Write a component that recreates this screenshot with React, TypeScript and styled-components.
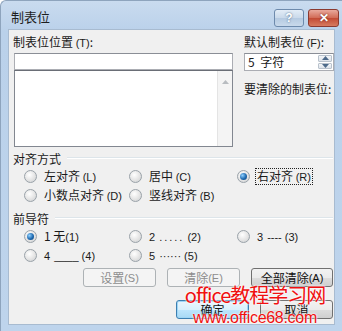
import React from 'react';
import styled, { createGlobalStyle, css } from 'styled-components';

const GlobalStyle = createGlobalStyle`
  html, body {
    margin: 0;
    padding: 0;
    background: #ffffff;
  }
  body {
    font-family: 'Noto Sans CJK SC', 'Liberation Sans', sans-serif;
    font-size: 12px;
    color: #1a1a1a;
  }
`;

// Window frame with the aero-like light blue border
const Window = styled.div`
  width: 342px;
  height: 331px;
  box-sizing: border-box;
  display: flex;
  flex-direction: column;
  background: linear-gradient(#c9dbef, #bad1ea 30px, #bed4ec);
  border-left: 1px solid #8ea4bd;
  border-top: 1px solid #8ea4bd;
  border-top-left-radius: 6px;
`;

const TitleBar = styled.div`
  height: 28px;
  display: flex;
  align-items: center;
  justify-content: space-between;
  padding: 0 3px 0 10px;
`;

const Title = styled.span`
  font-size: 13px;
  color: #1e1e1e;
  padding-top: 2px;
`;

const CaptionButtons = styled.div`
  display: flex;
  gap: 4px;
  align-self: flex-start;
  margin-top: 8px;
`;

const CaptionButton = styled.div<{ $close?: boolean }>`
  height: 18px;
  box-sizing: border-box;
  border: 1px solid #6d8aac;
  border-radius: 3px;
  display: flex;
  align-items: center;
  justify-content: center;
  font-family: 'Liberation Sans', sans-serif;
  font-weight: bold;
  font-size: 12px;
  ${(p) =>
    p.$close
      ? css`
          width: 31px;
          border-color: #8b3a30;
          background: linear-gradient(#e9a99c, #d16a55 50%, #c24a34 51%, #d77a5f);
          color: #ffffff;
          text-shadow: 0 0 2px #5a1a10;
        `
      : css`
          width: 30px;
          background: linear-gradient(#e3edf7, #c9d9ea 50%, #b5cae1 51%, #c8d9eb);
          color: #ffffff;
          text-shadow: 0 0 2px #3b5a7d;
        `}
`;

const Client = styled.div`
  position: relative;
  flex: 1;
  margin: 0 7px 6px 7px;
  background: #f0f0f0;
  border: 1px solid #a8bbd0;
  padding: 4px 0 0 4px;
  box-sizing: border-box;
`;

const TopArea = styled.div`
  display: grid;
  grid-template-columns: 220px 90px;
  column-gap: 11px;
`;

const Column = styled.div`
  display: flex;
  flex-direction: column;
`;

const Label = styled.div`
  height: 19px;
  line-height: 16px;
  white-space: nowrap;
`;

const TextInput = styled.div`
  height: 17px;
  box-sizing: border-box;
  margin-left: 1px;
  border: 1px solid #abadb3;
  border-top-color: #8a8e96;
  background: #ffffff;
`;

const ListBox = styled.div`
  height: 77px;
  box-sizing: border-box;
  margin-left: 1px;
  border: 1px solid #828790;
  border-top-color: #6a6e76;
  background: #ffffff;
  display: flex;
  justify-content: flex-end;
`;

const ScrollTrack = styled.div`
  width: 14px;
  border-left: 1px solid #e4e4e4;
  background: #f4f4f4;
  display: flex;
  justify-content: center;
  padding-top: 9px;
`;

const Spinner = styled.div`
  height: 18px;
  box-sizing: border-box;
  border: 1px solid #abadb3;
  border-top-color: #8a8e96;
  background: #ffffff;
  display: flex;
  align-items: center;
  justify-content: space-between;
  padding-left: 3px;
`;

const SpinValue = styled.span`
  line-height: 14px;
  font-size: 12px;
  word-spacing: 3px;
`;

const SpinButtons = styled.div`
  width: 14px;
  height: 14px;
  margin-right: 1px;
  display: flex;
  flex-direction: column;
  gap: 1px;
`;

const SpinButton = styled.div`
  flex: 1;
  border: 1px solid #b9c2cc;
  border-radius: 1px;
  background: linear-gradient(#f4f6f8, #dde3ea);
  display: flex;
  align-items: center;
  justify-content: center;
`;

const RightNote = styled.div`
  margin-top: 9px;
  white-space: nowrap;
`;

const GroupTitle = styled.div<{ $top: number }>`
  display: flex;
  align-items: center;
  margin-top: ${(p) => p.$top}px;
  height: 16px;
  white-space: nowrap;

  &::after {
    content: '';
    flex: 1;
    margin: 0 1px 0 6px;
    border-top: 1px solid #dde5ea;
    border-bottom: 1px solid #ffffff;
  }
`;

const RadioGrid = styled.div`
  display: grid;
  grid-template-columns: 105px 108px auto;
  row-gap: 6px;
  padding: 4px 0 0 11px;
`;

const RadioItem = styled.div`
  display: flex;
  align-items: center;
  height: 13px;
  gap: 6px;
  white-space: nowrap;
`;

const RadioCircle = styled.span<{ $checked?: boolean }>`
  position: relative;
  width: 11px;
  height: 11px;
  border-radius: 50%;
  border: 1px solid #9aa2a9;
  background: radial-gradient(circle at 40% 35%, #ffffff, #e4e4e4 55%, #c9cdd0);
  flex-shrink: 0;

  ${(p) =>
    p.$checked &&
    css`
      &::after {
        content: '';
        position: absolute;
        left: 2px;
        top: 2px;
        width: 7px;
        height: 7px;
        border-radius: 50%;
        background: radial-gradient(circle at 35% 35%, #8fd0ff, #1f6ab0 55%, #0b3e73);
      }
    `}
`;

const RadioText = styled.span<{ $focus?: boolean }>`
  line-height: 14px;
  padding: 0 1px;
  ${(p) =>
    p.$focus &&
    css`
      outline: 1px dotted #222;
      outline-offset: 0;
    `}
`;

const Key = styled.span`
  font-family: 'Liberation Sans', sans-serif;
  font-size: 11px;
`;

// leader samples are drawn in a latin face so the dots stay narrow
const Leader = styled.span<{ $spaced?: boolean }>`
  font-family: 'Liberation Sans', sans-serif;
  font-size: 11px;
  letter-spacing: ${(p) => (p.$spaced ? '2px' : '0')};
  margin: 0 3px 0 4px;
`;

const ButtonArea = styled.div`
  display: flex;
  flex-direction: column;
  align-items: flex-end;
  gap: 13px;
  margin-top: 6px;
  padding-right: 1px;
`;

const ButtonRow = styled.div`
  display: flex;
  gap: 11px;
`;

const Button = styled.div<{ $disabled?: boolean; $default?: boolean; $w?: number }>`
  width: ${(p) => p.$w ?? 73}px;
  height: 19px;
  box-sizing: border-box;
  border-radius: 3px;
  display: flex;
  align-items: center;
  justify-content: center;
  white-space: nowrap;
  border: 1px solid #707070;
  background: linear-gradient(#f2f2f2, #ebebeb 50%, #dddddd 51%, #cfcfcf);
  color: #111;
  ${(p) =>
    p.$disabled &&
    css`
      border-color: #adb2b5;
      background: #f4f4f4;
      color: #8d8d8d;
    `}
  ${(p) =>
    p.$default &&
    css`
      border-color: #3c7fb1;
      box-shadow: inset 0 0 0 1px #9fd6f6;
      background: linear-gradient(#eaf6fd, #d9f0fc 50%, #bee6fd 51%, #a7d9f5);
    `}
`;

const Watermark = styled.div`
  position: absolute;
  left: 176px;
  top: 253px;
  width: 140px;
  display: flex;
  flex-direction: column;
  align-items: center;
  color: #f01010;
  pointer-events: none;
  text-shadow: 0 0 2px #ffffff, 0 0 2px #ffffff;
`;

const WatermarkTitle = styled.div`
  font-size: 20px;
  line-height: 24px;
  letter-spacing: -1px;
  white-space: nowrap;
`;

const WatermarkUrl = styled.div`
  font-family: 'Liberation Sans', sans-serif;
  font-size: 16px;
  line-height: 16px;
  margin-top: 3px;
  letter-spacing: -0.3px;
  white-space: nowrap;
`;

type RadioProps = {
  label: React.ReactNode;
  checked?: boolean;
  focus?: boolean;
};

function Radio({ label, checked, focus }: RadioProps) {
  return (
    <RadioItem>
      <RadioCircle $checked={checked} />
      <RadioText $focus={focus}>{label}</RadioText>
    </RadioItem>
  );
}

const Arrow = ({ up, color = '#4d6a8a' }: { up?: boolean; color?: string }) => (
  <svg width="7" height="4" viewBox="0 0 7 4">
    <path d={up ? 'M0 4 L3.5 0 L7 4 Z' : 'M0 0 L3.5 4 L7 0 Z'} fill={color} />
  </svg>
);

export default function App() {
  return (
    <>
      <GlobalStyle />
      <Window>
        <TitleBar>
          <Title>制表位</Title>
          <CaptionButtons>
            <CaptionButton>?</CaptionButton>
            <CaptionButton $close>✕</CaptionButton>
          </CaptionButtons>
        </TitleBar>

        <Client>
          <TopArea>
            <Column>
              <Label>
                制表位位置 <Key>(T)</Key>:
              </Label>
              <TextInput />
              <ListBox>
                <ScrollTrack>
                  <Arrow up color="#b8bcc0" />
                </ScrollTrack>
              </ListBox>
            </Column>
            <Column>
              <Label>
                默认制表位 <Key>(F)</Key>:
              </Label>
              <Spinner>
                <SpinValue>5 字符</SpinValue>
                <SpinButtons>
                  <SpinButton>
                    <Arrow up />
                  </SpinButton>
                  <SpinButton>
                    <Arrow />
                  </SpinButton>
                </SpinButtons>
              </Spinner>
              <RightNote>要清除的制表位:</RightNote>
            </Column>
          </TopArea>

          <GroupTitle $top={3}>对齐方式</GroupTitle>
          <RadioGrid>
            <Radio label={<>左对齐 <Key>(L)</Key></>} />
            <Radio label={<>居中 <Key>(C)</Key></>} />
            <Radio label={<>右对齐 <Key>(R)</Key></>} checked focus />
            <Radio label={<>小数点对齐 <Key>(D)</Key></>} />
            <Radio label={<>竖线对齐 <Key>(B)</Key></>} />
          </RadioGrid>

          <GroupTitle $top={8}>前导符</GroupTitle>
          <RadioGrid>
            <Radio label={<>1 无<Key>(1)</Key></>} checked />
            <Radio label={<><Key>2</Key><Leader $spaced>.....</Leader><Key>(2)</Key></>} />
            <Radio label={<><Key>3</Key><Leader>----</Leader><Key>(3)</Key></>} />
            <Radio label={<><Key>4</Key><Leader>____</Leader><Key>(4)</Key></>} />
            <Radio label={<><Key>5</Key><Leader>······</Leader><Key>(5)</Key></>} />
          </RadioGrid>

          <ButtonArea>
            <ButtonRow>
              <Button $disabled>设置 <Key>(S)</Key></Button>
              <Button $disabled>清除 <Key>(E)</Key></Button>
              <Button $w={82}>全部清除 <Key>(A)</Key></Button>
            </ButtonRow>
            <ButtonRow>
              <Button $default>确定</Button>
              <Button>取消</Button>
            </ButtonRow>
          </ButtonArea>

          <Watermark>
            <WatermarkTitle>office教程学习网</WatermarkTitle>
            <WatermarkUrl>www.office68.com</WatermarkUrl>
          </Watermark>
        </Client>
      </Window>
    </>
  );
}
